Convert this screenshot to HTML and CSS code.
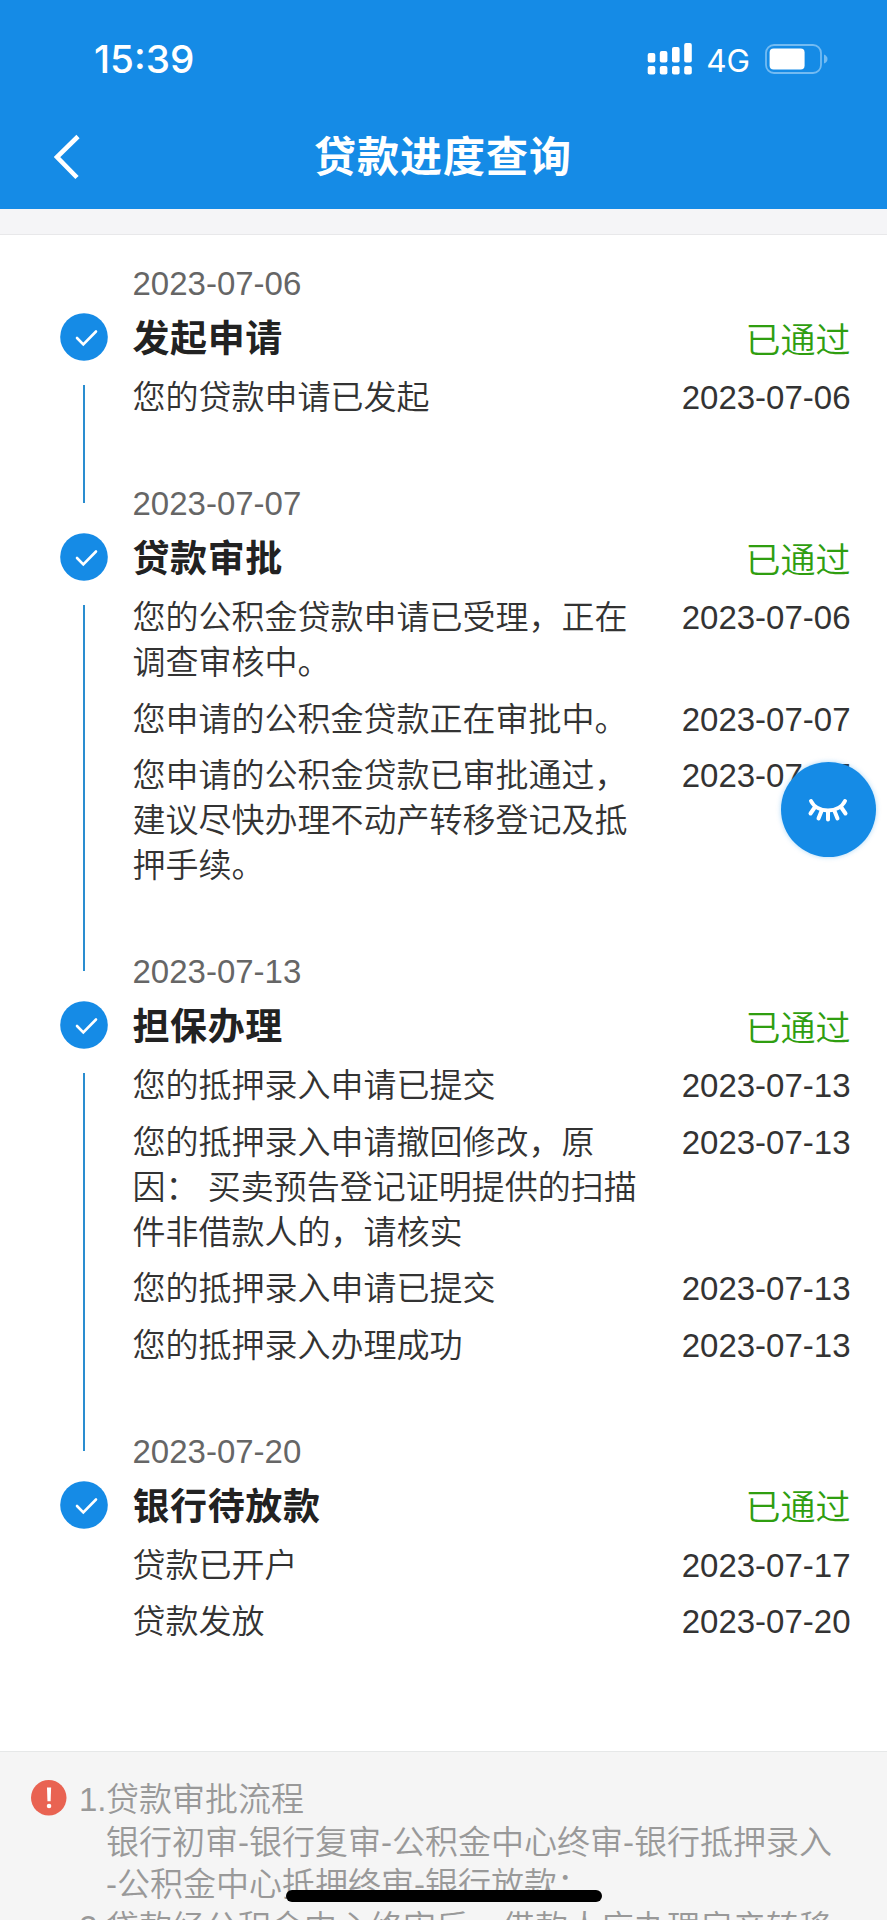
FILE: index.html
```html
<!DOCTYPE html>
<html lang="zh-CN">
<head>
  <meta charset="UTF-8" />
  <meta name="viewport" content="width=device-width, initial-scale=1.0"/>
  <title>贷款进度查询</title>
  <link rel="stylesheet" href="styles.css">
</head>
<body>

  <header>
    <div class="status-bar">
      <span class="time">15:39</span>
      <svg class="signal" width="46" height="34" viewBox="0 0 46 34" fill="#fff">
        <rect x="0.7" y="11" width="7.6" height="9.5" rx="2"/>
        <rect x="12.8" y="9" width="7.6" height="11.5" rx="2"/>
        <rect x="25" y="5" width="7.6" height="15.5" rx="2"/>
        <rect x="37.2" y="1" width="7.6" height="19.5" rx="2"/>
        <rect x="0.7" y="24" width="7.6" height="8.6" rx="2"/>
        <rect x="12.8" y="24" width="7.6" height="8.6" rx="2"/>
        <rect x="25" y="24" width="7.6" height="8.6" rx="2"/>
        <rect x="37.2" y="24" width="7.6" height="8.6" rx="2"/>
      </svg>
      <span class="network">4G</span>
      <svg class="battery" width="64" height="30" viewBox="0 0 64 30">
        <rect x="1" y="1" width="55" height="28" rx="8" fill="none" stroke="#73bbf2" stroke-width="1.8"/>
        <rect x="4.6" y="4.6" width="35" height="20.8" rx="4" fill="#fff"/>
        <path d="M59 10.5 Q62.5 12 62.5 15 Q62.5 18 59 19.5 Z" fill="#73bbf2"/>
      </svg>
    </div>
    <div class="nav-bar">
      <svg class="back" width="28" height="46" viewBox="0 0 28 46">
        <path d="M24 2.5 L3 23 L23 43.5" fill="none" stroke="#fff" stroke-width="4.6"/>
      </svg>
      <h1>贷款进度查询</h1>
    </div>
  </header>

  <main class="timeline">
    <section class="step">
      <div class="marker">
        <svg class="check" viewBox="0 0 48 48"><circle cx="24" cy="24" r="23.8"/><path d="M17 25 L23.3 31.3 L36 18.5"/></svg>
        <div class="line"></div>
      </div>
      <div class="content">
        <div class="date">2023-07-06</div>
        <div class="head"><h2>发起申请</h2><span class="passed">已通过</span></div>
        <div class="entry"><p>您的贷款申请已发起</p><time>2023-07-06</time></div>
      </div>
    </section>

    <section class="step">
      <div class="marker">
        <svg class="check" viewBox="0 0 48 48"><circle cx="24" cy="24" r="23.8"/><path d="M17 25 L23.3 31.3 L36 18.5"/></svg>
        <div class="line"></div>
      </div>
      <div class="content">
        <div class="date">2023-07-07</div>
        <div class="head"><h2>贷款审批</h2><span class="passed">已通过</span></div>
        <div class="entry"><p>您的公积金贷款申请已受理，正在调查审核中。</p><time>2023-07-06</time></div>
        <div class="entry"><p>您申请的公积金贷款正在审批中。</p><time>2023-07-07</time></div>
        <div class="entry"><p>您申请的公积金贷款已审批通过，建议尽快办理不动产转移登记及抵押手续。</p><time>2023-07-07</time></div>
      </div>
    </section>

    <section class="step">
      <div class="marker">
        <svg class="check" viewBox="0 0 48 48"><circle cx="24" cy="24" r="23.8"/><path d="M17 25 L23.3 31.3 L36 18.5"/></svg>
        <div class="line"></div>
      </div>
      <div class="content">
        <div class="date">2023-07-13</div>
        <div class="head"><h2>担保办理</h2><span class="passed">已通过</span></div>
        <div class="entry"><p>您的抵押录入申请已提交</p><time>2023-07-13</time></div>
        <div class="entry"><p>您的抵押录入申请撤回修改，原因： 买卖预告登记证明提供的扫描件非借款人的，请核实</p><time>2023-07-13</time></div>
        <div class="entry"><p>您的抵押录入申请已提交</p><time>2023-07-13</time></div>
        <div class="entry"><p>您的抵押录入办理成功</p><time>2023-07-13</time></div>
      </div>
    </section>

    <section class="step">
      <div class="marker">
        <svg class="check" viewBox="0 0 48 48"><circle cx="24" cy="24" r="23.8"/><path d="M17 25 L23.3 31.3 L36 18.5"/></svg>
      </div>
      <div class="content">
        <div class="date">2023-07-20</div>
        <div class="head"><h2>银行待放款</h2><span class="passed">已通过</span></div>
        <div class="entry"><p>贷款已开户</p><time>2023-07-17</time></div>
        <div class="entry"><p>贷款发放</p><time>2023-07-20</time></div>
      </div>
    </section>
  </main>

  <footer>
    <svg class="warn" viewBox="0 0 36 36">
      <circle cx="18" cy="18" r="18" fill="#e96352"/>
      <path d="M16.2 7.5 H20.4 L19.9 21.5 H16.7 Z" fill="#fff"/>
      <circle cx="18.3" cy="26.3" r="2.3" fill="#fff"/>
    </svg>
    <div class="notes">
      <div class="note"><span>1.</span><p>贷款审批流程<br>银行初审-银行复审-公积金中心终审-银行抵押录入<br>-公积金中心抵押终审-银行放款；</p></div>
      <div class="note"><span>2.</span><p>贷款经公积金中心终审后，借款人应办理房产转移</p></div>
    </div>
  </footer>

  <button class="float-btn">
    <svg width="42" height="24" viewBox="0 0 42 24" fill="none" stroke="#fff" stroke-width="4" stroke-linecap="round">
      <path d="M4 3 C10 15.5 32 15.5 38 3"/>
      <path d="M8 9 L3.5 15.5 M14.5 13 L11.5 20.5 M21 13 V21.5 M27.5 13 L30.5 20.5 M34 9 L38.5 15.5"/>
    </svg>
  </button>
  <div class="home-indicator"></div>

</body>
</html>
```
FILE: styles.css
```css
* {
  box-sizing: border-box;
}
body {
  position: relative;
  margin: 0;
  height: 1920px;
  overflow: hidden;
  background-color: #f5f5f7;
  color: #333;
  font-family: "Liberation Sans", "Noto Sans CJK SC", sans-serif;
  font-size: 33px;
  font-weight: 350;
  line-height: 45px;
}
h1, h2, p {
  margin: 0;
}
header {
  height: 209px;
  background-color: #158be6;
  color: #fff;
}
.status-bar {
  display: flex;
  align-items: center;
  height: 118px;
  padding: 0 58px 0 94px;
  font-family: Inter, sans-serif;
  font-weight: 400;
}
.time {
  flex: 1;
  padding-top: 1px;
  font-size: 38.7px;
  font-weight: 550;
}
.network {
  margin: 3px 15px 0 13px;
  font-size: 31.5px;
}
.nav-bar {
  display: flex;
  align-items: center;
  height: 77px;
  padding: 0 54px;
}
h1 {
  flex: 1;
  margin-right: 29px;
  padding-top: 2px;
  text-align: center;
  font-size: 42px;
  font-weight: 600;
  letter-spacing: 1px;
}
.timeline {
  height: 1518px;
  margin-top: 25px;
  padding: 26px 36.5px 0 60px;
  border-top: 1px solid #e8e8ea;
  border-bottom: 1px solid #e6e8e8;
  background-color: #fff;
}
.step {
  display: flex;
}
.marker {
  display: flex;
  flex-direction: column;
  align-items: center;
  width: 48px;
  margin-right: 24.5px;
  padding-top: 52px;
}
.check {
  width: 48px;
  height: 48px;
  fill: #158be6;
}
.check path {
  fill: none;
  stroke: #fff;
  stroke-width: 2.6;
  stroke-linecap: round;
}
.line {
  flex: 1;
  width: 2.4px;
  margin: 24px 0 -22px;
  background-color: #2a8dd0;
}
.content {
  flex: 1;
  padding-bottom: 61px;
}
.date {
  color: #666;
}
.head {
  display: flex;
  align-items: center;
  justify-content: space-between;
  height: 67px;
  margin-bottom: 2px;
}
h2 {
  color: #222;
  font-size: 37px;
  font-weight: 600;
  letter-spacing: 0.6px;
}
.passed {
  padding-top: 1px;
  color: #2f9e10;
  font-size: 35px;
}
.entry {
  display: flex;
  justify-content: space-between;
}
.entry + .entry {
  margin-top: 11.5px;
}
.entry p {
  width: 508px;
}
footer {
  display: flex;
  align-items: flex-start;
  padding: 27px 0 0 31px;
  background-color: #f5f5f5;
  color: #999;
  line-height: 42.5px;
}
.warn {
  width: 35.5px;
  height: 35.5px;
  margin: 1px 12.5px 0 0;
}
.note {
  display: flex;
  white-space: nowrap;
}
.note span {
  width: 27px;
}
.float-btn {
  position: absolute;
  top: 762px;
  left: 780.5px;
  display: flex;
  align-items: center;
  justify-content: center;
  width: 95px;
  height: 95px;
  padding: 0;
  border: 0;
  border-radius: 50%;
  background-color: #158be6;
  box-shadow: 0 0 5px rgba(21, 139, 230, 0.35);
}
.home-indicator {
  position: absolute;
  top: 1890px;
  left: 286px;
  width: 316px;
  height: 12px;
  border-radius: 6px;
  background-color: #000;
}
```
